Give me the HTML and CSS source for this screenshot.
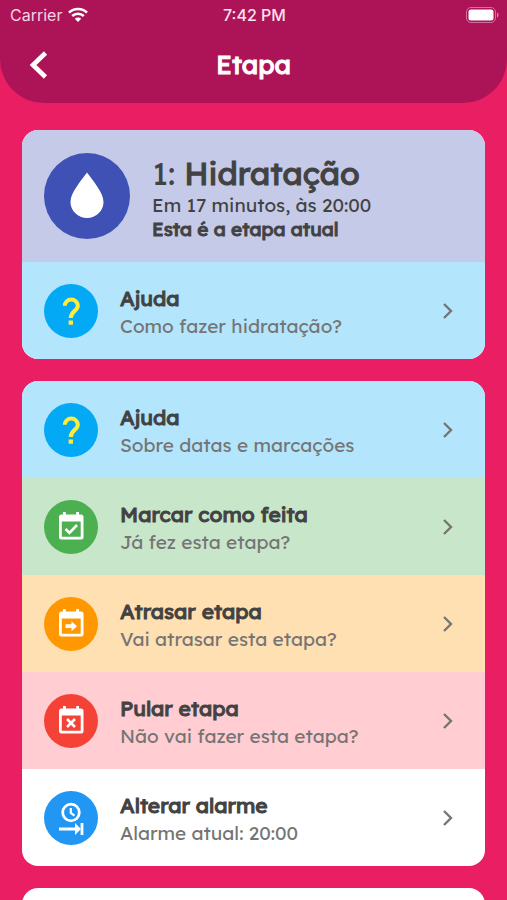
FILE: index.html
```
<!DOCTYPE html>
<html lang="pt-BR">
<head>
  <meta charset="UTF-8">
  <meta name="viewport" content="width=device-width, initial-scale=1.0">
  <title>Etapa</title>
  <link rel="stylesheet" href="styles.css">
</head>
<body>
  <!-- Shared icons -->
  <svg class="sprite" aria-hidden="true">
    <symbol id="chevron" viewBox="0 0 12 18">
      <path d="M2 2l7 7-7 7" fill="none" stroke="currentColor" stroke-width="2.4"/>
    </symbol>
    <symbol id="question" viewBox="0 0 54 54">
      <path d="M20.800 21.800a6.500 6.300 0 0 1 13 0c0 5.200-7 5.200-7 12.200" fill="none" stroke="#ffeb3b" stroke-width="4"/>
      <path d="M24.600 36.500h4.400v4.200h-4.400z" fill="#ffeb3b"/>
    </symbol>
    <symbol id="calendar" viewBox="0 0 54 54">
      <path fill="#fff" fill-rule="evenodd" d="M19 12h2.800v2.500h10.400V12H35v2.500h2a2.500 2.500 0 0 1 2.500 2.500v20a2.500 2.500 0 0 1-2.500 2.500H17.500A2.500 2.500 0 0 1 15 37V17a2.500 2.500 0 0 1 2.500-2.500H19zM17.800 21.500v15.200h18.900V21.500z"/>
    </symbol>
  </svg>

  <header class="header">
    <div class="status-bar">
      <div class="carrier">
        <span>Carrier</span>
        <svg width="20" height="16" viewBox="0 0 20 16" fill="none" stroke="#fff" stroke-width="2.600">
          <path d="M1 5.600a13 13 0 0 1 18 0M4.200 9a8.400 8.400 0 0 1 11.600 0"/>
          <path d="M10 15l-3.200-3.200a4.600 4.600 0 0 1 6.400 0z" fill="#fff" stroke="none"/>
        </svg>
      </div>
      <span class="time">7:42 PM</span>
      <svg class="battery" width="33" height="16" viewBox="0 0 33 16">
        <rect x="0.500" y="0.500" width="29" height="15" rx="4.500" fill="none" stroke="#fff" stroke-opacity=".4"/>
        <rect x="2.500" y="2.500" width="25" height="11" rx="2.500" fill="#fff"/>
        <path d="M31 5.500c2 .8 2 4.200 0 5z" fill="#fff" fill-opacity=".5"/>
      </svg>
    </div>
    <div class="nav-bar">
      <button class="back" type="button" aria-label="Voltar">
        <svg width="20" height="30" viewBox="0 0 20 30">
          <path d="M17.500 3L5 15l12.500 12" fill="none" stroke="#fff" stroke-width="4.600"/>
        </svg>
      </button>
      <h1>Etapa</h1>
    </div>
  </header>

  <main class="content">
    <section class="card">
      <div class="step">
        <svg class="step-icon" viewBox="0 0 86 86">
          <path d="M43 19.500C49 28 59.500 39.500 59.500 49a16.500 16 0 0 1-33 0C26.500 39.500 37 28 43 19.500z" fill="#fff"/>
        </svg>
        <div class="step-text">
          <h2>1: <b>Hidratação</b></h2>
          <p>Em 17 minutos, às 20:00</p>
          <p><b>Esta é a etapa atual</b></p>
        </div>
      </div>
      <a class="row help" href="#">
        <svg class="icon"><use href="#question"/></svg>
        <span class="text"><b>Ajuda</b><span>Como fazer hidratação?</span></span>
        <svg class="arrow"><use href="#chevron"/></svg>
      </a>
    </section>

    <section class="card">
      <a class="row help" href="#">
        <svg class="icon"><use href="#question"/></svg>
        <span class="text"><b>Ajuda</b><span>Sobre datas e marcações</span></span>
        <svg class="arrow"><use href="#chevron"/></svg>
      </a>
      <a class="row done" href="#">
        <svg class="icon" viewBox="0 0 54 54">
          <use href="#calendar"/>
          <path d="M21.500 29l4 4 7.500-8" fill="none" stroke="#fff" stroke-width="2.600"/>
        </svg>
        <span class="text"><b>Marcar como feita</b><span>Já fez esta etapa?</span></span>
        <svg class="arrow"><use href="#chevron"/></svg>
      </a>
      <a class="row delay" href="#">
        <svg class="icon" viewBox="0 0 54 54">
          <use href="#calendar"/>
          <path d="M21.500 27.300h6V24.200l5.500 5-5.500 5v-3.100h-6z" fill="#fff"/>
        </svg>
        <span class="text"><b>Atrasar etapa</b><span>Vai atrasar esta etapa?</span></span>
        <svg class="arrow"><use href="#chevron"/></svg>
      </a>
      <a class="row skip" href="#">
        <svg class="icon" viewBox="0 0 54 54">
          <use href="#calendar"/>
          <path d="M23 25l8 8M31 25l-8 8" fill="none" stroke="#fff" stroke-width="2.600"/>
        </svg>
        <span class="text"><b>Pular etapa</b><span>Não vai fazer esta etapa?</span></span>
        <svg class="arrow"><use href="#chevron"/></svg>
      </a>
      <a class="row alarm" href="#">
        <svg class="icon" viewBox="0 0 54 54" fill="none" stroke="#fff">
          <circle cx="27" cy="21.500" r="8.300" stroke-width="2.800"/>
          <path d="M26.800 17v5l3.700 2.700" stroke-width="2.200"/>
          <path d="M15 38h18M38 32v12" stroke-width="2.800"/>
          <path d="M31 32l6 6-6 6z" fill="#fff" stroke="none"/>
        </svg>
        <span class="text"><b>Alterar alarme</b><span>Alarme atual: 20:00</span></span>
        <svg class="arrow"><use href="#chevron"/></svg>
      </a>
    </section>

    <section class="card next"></section>
  </main>
</body>
</html>
```
FILE: styles.css
```
/* Reset styles */
* {
  margin: 0;
  padding: 0;
  box-sizing: border-box;
}

body {
  font-family: Lexend, Inter, sans-serif;
  font-size: 19px;
  line-height: 24px;
  color: #424242;
  background-color: #e91e63;
  display: flex;
  flex-direction: column;
  height: 100vh;
  overflow: hidden;
}

svg {
  display: block;
  flex-shrink: 0;
}

.sprite {
  position: absolute;
  width: 0;
  height: 0;
}

/* Thick look without the wider bold letters */
h1,
b {
  font-weight: 400;
  -webkit-text-stroke: 1px currentColor;
}

/* Header */
.header {
  flex-shrink: 0;
  padding-bottom: 8px;
  background-color: #ad1457;
  border-radius: 0 0 44px 44px;
  color: #fff;
}

.status-bar {
  display: grid;
  grid-template-columns: 1fr auto 1fr;
  align-items: center;
  height: 29px;
  padding: 0 8px 0 10px;
  font-family: Inter, sans-serif;
  font-size: 16px;
}

.carrier {
  display: flex;
  align-items: center;
  gap: 6px;
  color: #f5d5e2;
}

.time {
  font-weight: 500;
  color: #f9e4ec;
}

.battery {
  justify-self: end;
}

.nav-bar {
  display: grid;
  grid-template-columns: 60px 1fr 60px;
  align-items: center;
  height: 66px;
  padding: 6px 8px 0;
}

.nav-bar h1 {
  font-size: 26px;
  line-height: 32px;
  text-align: center;
}

.back {
  display: flex;
  justify-content: center;
  align-items: center;
  height: 60px;
  background: none;
  border: none;
  cursor: pointer;
}

/* Cards */
.content {
  flex: 1;
  min-height: 0;
  display: flex;
  flex-direction: column;
  gap: 22px;
  padding: 27px 22px 22px;
  overflow-y: auto;
  scrollbar-width: none;
}

.card {
  flex-shrink: 0;
  border-radius: 16px;
  background-color: #fff;
  overflow: hidden;
}

.next {
  min-height: 97px;
}

.step {
  display: flex;
  align-items: center;
  gap: 22px;
  height: 132px;
  padding: 0 22px;
  background-color: #c5cae9;
}

.step-icon {
  width: 86px;
  height: 86px;
  border-radius: 50%;
  background-color: #3f51b5;
}

.step-text {
  padding-top: 2px;
}

.step h2 {
  font-size: 32px;
  font-weight: 400;
  line-height: 40px;
}

/* Rows */
.row {
  display: flex;
  align-items: center;
  gap: 22px;
  height: 97px;
  padding: 0 31px 0 22px;
  color: #757575;
  text-decoration: none;
}

.icon {
  width: 54px;
  height: 54px;
  border-radius: 50%;
}

.text {
  flex: 1;
  display: flex;
  flex-direction: column;
  padding-top: 2px;
  line-height: 28px;
}

.text b {
  font-size: 21px;
  color: #424242;
}

.arrow {
  width: 12px;
  height: 18px;
}

.help {
  background-color: #b3e5fc;
}

.help .icon {
  background-color: #03a9f4;
}

.done {
  background-color: #c8e6c9;
}

.done .icon {
  background-color: #4caf50;
}

.delay {
  background-color: #ffe0b2;
}

.delay .icon {
  background-color: #ff9800;
}

.skip {
  background-color: #ffcdd2;
}

.skip .icon {
  background-color: #f44336;
}

.alarm .icon {
  background-color: #2196f3;
}
```
